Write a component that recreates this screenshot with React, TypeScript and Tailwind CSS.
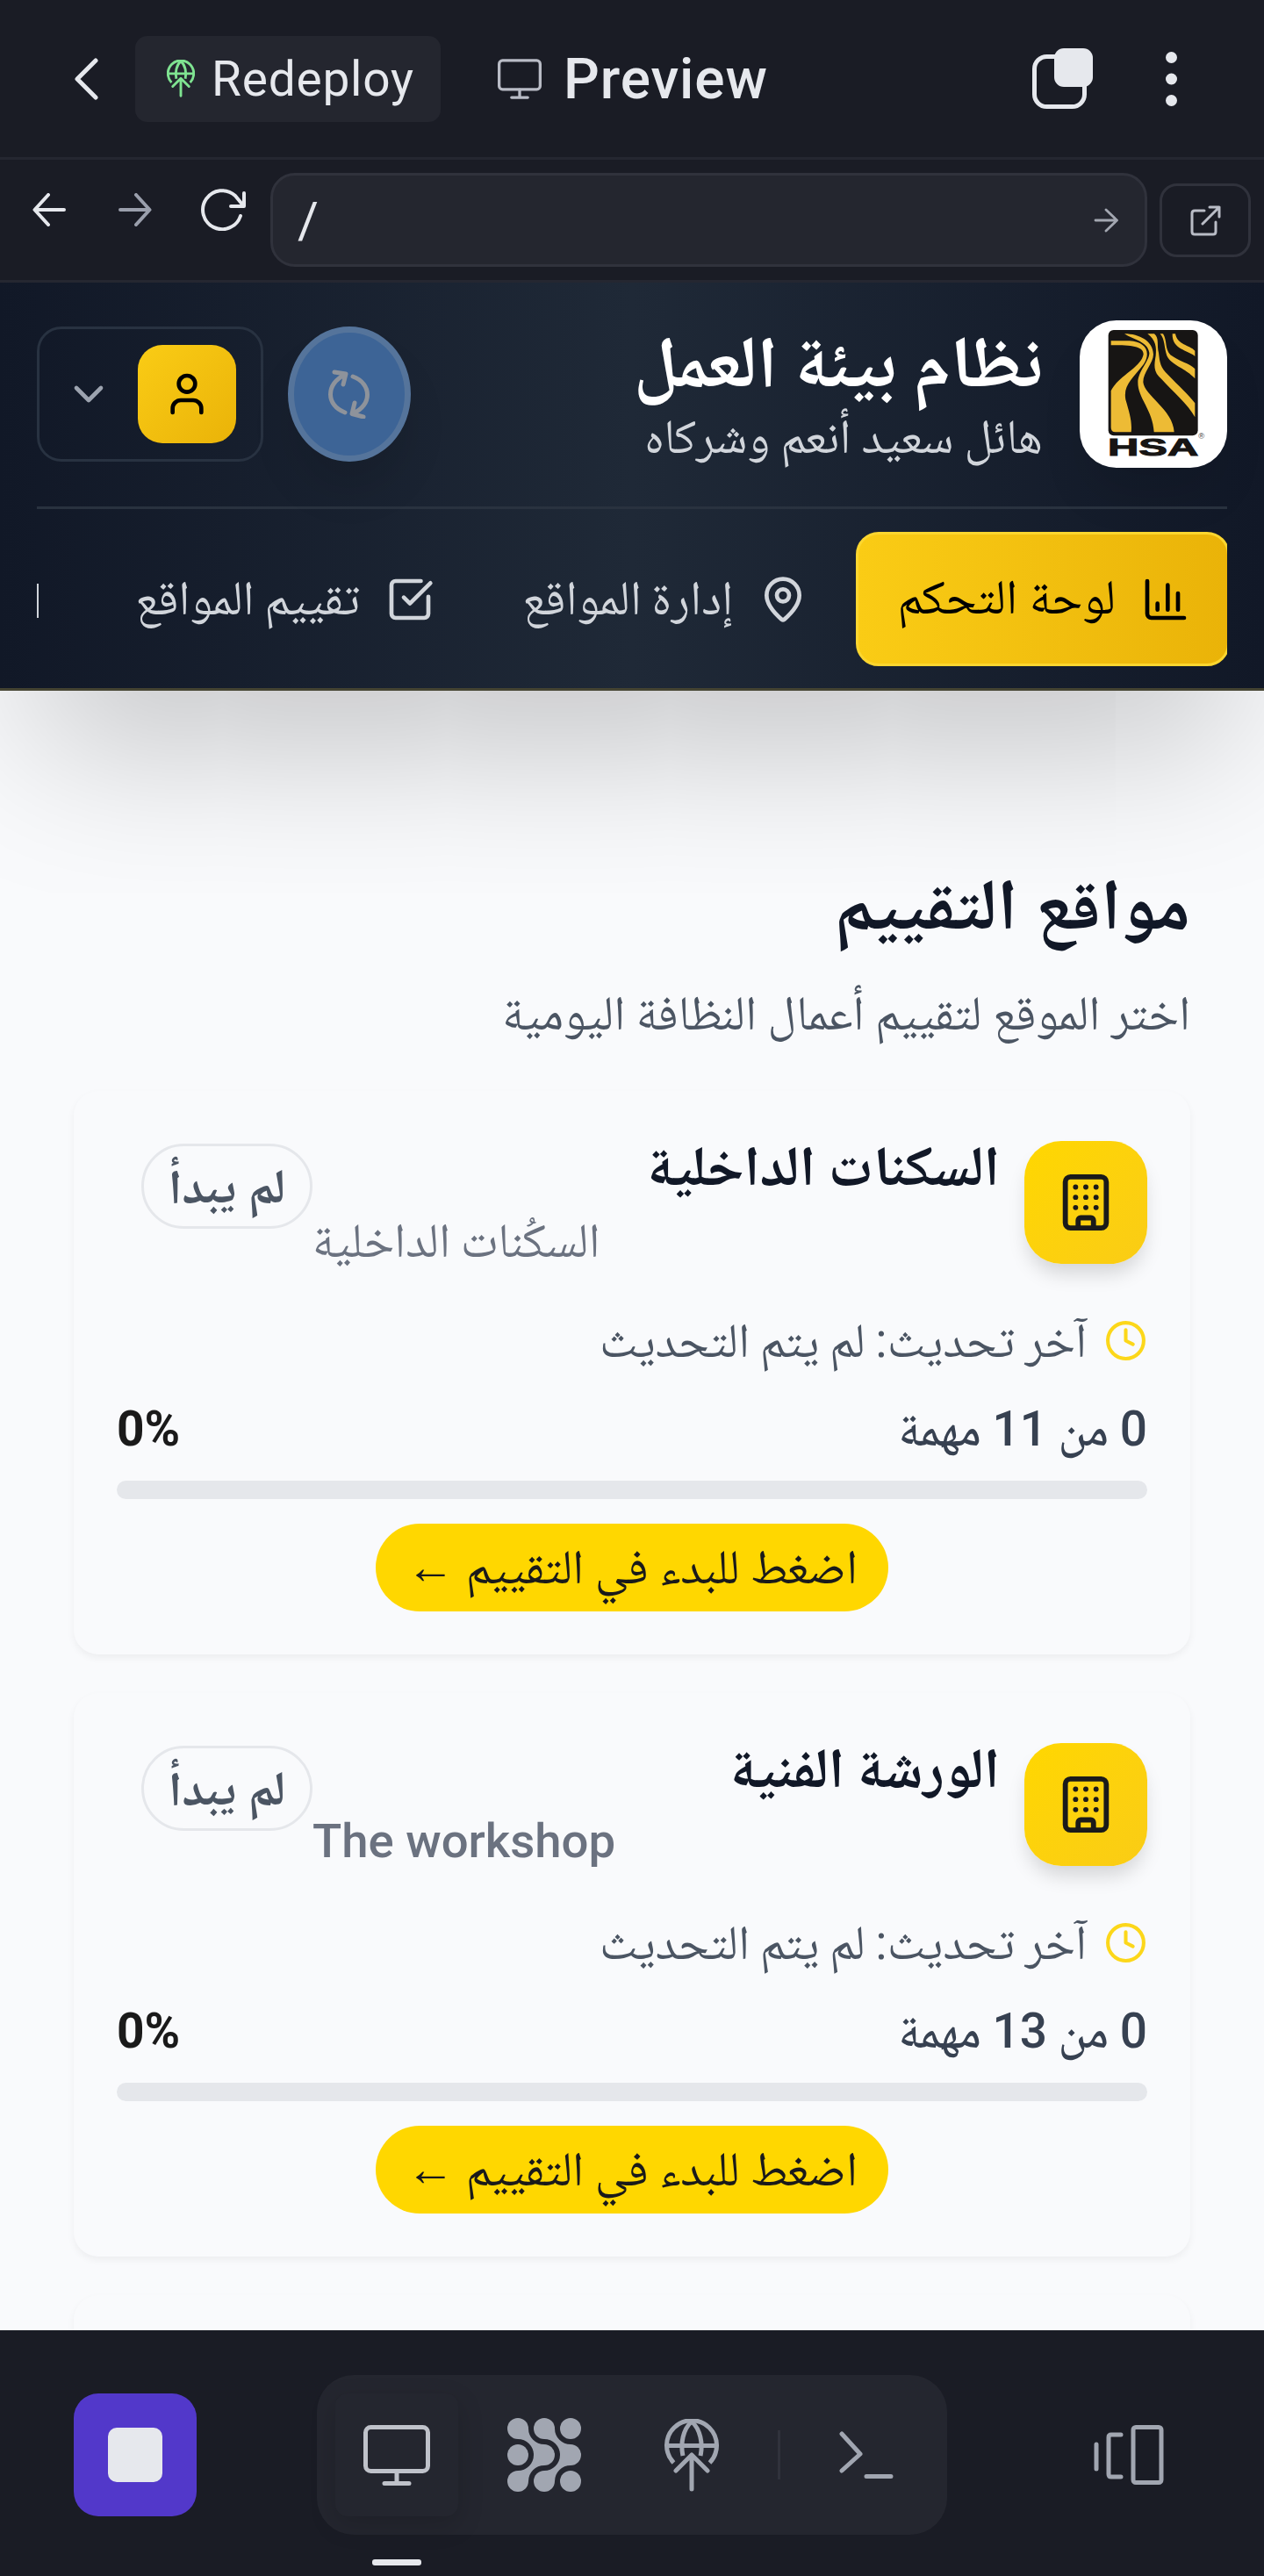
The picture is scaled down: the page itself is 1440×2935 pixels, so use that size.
import type { ReactNode } from "react";
import { Building, ChartColumn, ChevronDown, Clock, MapPin, SquareCheckBig, User } from "lucide-react";

function Line({ w, h, sw = 5, className = "", children }: { w: number; h: number; sw?: number; className?: string; children: ReactNode }) {
  return (
    <svg width={w} height={h} viewBox={`0 0 ${w} ${h}`} fill="none" stroke="currentColor" strokeWidth={sw} strokeLinecap="round" strokeLinejoin="round" className={`shrink-0 ${className}`}>
      {children}
    </svg>
  );
}

function GlobeUp({ w, h, sw }: { w: number; h: number; sw: number }) {
  return (
    <svg width={w} height={h} viewBox="0 0 62 83" fill="none" stroke="currentColor" strokeWidth={sw} className="shrink-0">
      <path d="M10.500 50A28.500 28.500 0 1 1 51.500 50" />
      <path d="M2.500 30.500H59.500M31 3C21 12 18 28 21 42M31 3C41 12 44 28 41 42" />
      <path d="M31 42V80M13 59L31 41L49 59" strokeLinecap="round" strokeLinejoin="round" />
    </svg>
  );
}

function Monitor({ w, h, sw }: { w: number; h: number; sw: number }) {
  return (
    <svg width={w} height={h} viewBox="0 0 76 69" fill="none" stroke="currentColor" strokeWidth={sw} strokeLinecap="round" strokeLinejoin="round" className="shrink-0">
      <rect x="2.500" y="2.500" width="71" height="50" rx="6" />
      <path d="M38 53V66M24 66.500H52" />
    </svg>
  );
}

function Logo() {
  return (
    <svg width="168" height="168" viewBox="30 14 504 504" direction="ltr">
      <rect x="128" y="47" width="306" height="361" rx="18" fill="#171514" />
      <g fill="#edbb35">
        <path d="M137 84H200C255 87 276 122 248 165C212 212 178 235 187 285C200 330 210 360 206 396H152Q137 396 137 380V255C160 205 240 175 248 130C248 105 215 98 137 99Z" />
        <path d="M183 60C235 60 280 85 282 130C282 160 247 190 247 225C250 270 350 320 353 396H284C280 320 228 280 229 225C229 190 270 150 268 125C262 85 215 82 183 60Z" />
        <path d="M262 60H285C303 75 293 100 300 125C304 160 306 175 332 200C370 240 400 265 424 297V345C400 300 345 255 310 215C280 190 285 165 290 135C293 105 290 82 262 60Z" />
        <path d="M305 60H315C330 85 320 110 340 132C370 155 405 160 424 180V213C395 180 340 165 328 135C318 105 322 80 305 60Z" />
        <path d="M347 60H357C364 98 405 98 424 118V137C400 115 345 115 347 60Z" />
      </g>
      <text x="126" y="475" textLength="310" lengthAdjust="spacingAndGlyphs" fontFamily="Liberation Sans" fontWeight="bold" fontSize="82" fill="#171514" stroke="#171514" strokeWidth="3">HSA</text>
      <text x="436" y="419" fontFamily="Liberation Sans" fontSize="28" fill="#444">®</text>
    </svg>
  );
}

function BlobGrid() {
  const dots = [12, 42, 72];
  return (
    <svg width="84" height="84" viewBox="0 0 84 84" fill="currentColor">
      {dots.map((x) => dots.map((y) => <circle key={`${x}-${y}`} cx={x} cy={y} r="12" />))}
      {[0, 30].map((dx) => (
        <g key={dx} transform={`translate(${dx} 0)`}>
          <path d="M12 12V24A18 18 0 0 1 30 42H42V30A18 18 0 0 1 24 12Z" />
          <path d="M12 72V60A18 18 0 0 0 30 42H42V54A18 18 0 0 0 24 72Z" />
        </g>
      ))}
    </svg>
  );
}

function TopBar() {
  return (
    <header className="flex h-[182px] items-center border-b-[3px] border-[#252731] pl-[85px] pr-[99px] text-[#e6e8ed]">
      <Line w={27} h={48} sw={5}>
        <path d="M24 3L3 24L24 45" />
      </Line>
      <button className="ml-[42px] flex h-[98px] w-[348px] items-center rounded-[14px] bg-[#24262f] pl-[36px]">
        <span className="text-[#7fe391]">
          <GlobeUp w={32} h={43} sw={5.6} />
        </span>
        <span className="mt-[1px] ml-[19px] text-[55px] leading-[84px] tracking-[0.8px]">Redeploy</span>
      </button>
      <div className="ml-[65px] flex items-center">
        <span className="text-[#b9bcc6]">
          <Monitor w={50} h={46} sw={5} />
        </span>
        <span className="mt-[2px] ml-[25px] text-[64px] leading-[84px] font-medium tracking-[0.9px]">Preview</span>
      </div>
      <div className="ml-auto flex items-center gap-[83px]">
        <svg width="69" height="69" viewBox="0 0 69 69" className="mt-0">
          <rect x="2.500" y="9.500" width="57" height="57" rx="14" fill="none" stroke="#e6e8ed" strokeWidth="5" />
          <rect x="25" y="0" width="44" height="44" rx="11" fill="#e6e8ed" />
        </svg>
        <svg width="13" height="62" viewBox="0 0 13 62" fill="#e6e8ed">
          <circle cx="6.500" cy="6.500" r="6.500" />
          <circle cx="6.500" cy="31" r="6.500" />
          <circle cx="6.500" cy="55.500" r="6.500" />
        </svg>
      </div>
    </header>
  );
}

function AddressBar() {
  return (
    <div className="flex h-[140px] items-start border-b-[3px] border-[#252731] text-[#e6e8ed]">
      <Line w={38} h={38} sw={4} className="mt-[38px] ml-[37px]">
        <path d="M36 19H3M18 2L2.500 19L18 36" />
      </Line>
      <Line w={38} h={38} sw={4} className="mt-[38px] ml-[60px] text-[#9a9fac]">
        <path d="M2 19H35M20 2L35.500 19L20 36" />
      </Line>
      <Line w={52} h={48} sw={4} className="mt-[33px] ml-[56px]">
        <path d="M45 31A22 22 0 1 1 39 8L48 19M49 5V20H34" />
      </Line>
      <div className="mt-[15px] ml-[27px] flex h-[107px] w-[999px] items-center justify-between rounded-[28px] border-[3px] border-[#30323c] bg-[#24262f] pr-[29px] pl-[28px]">
        <span className="text-[58px] leading-[84px]">/</span>
        <Line w={29} h={28} sw={2.800} className="text-[#a3a7b1]">
          <path d="M2 14H26M14 2L26.500 14L14 26" />
        </Line>
      </div>
      <button className="mt-[27px] ml-[14px] flex h-[84px] w-[104px] items-center justify-center rounded-[20px] border-[3px] border-[#30323c] text-[#b9bcc6]">
        <Line w={35} h={35} sw={3}>
          <path d="M16 6H5Q2 6 2 9V30Q2 33 5 33H26Q29 33 29 30V19M22 2H33V13M33 2L14 21" />
        </Line>
      </button>
    </div>
  );
}

function NavItem({ icon, label, active = false }: { icon: ReactNode; label: string; active?: boolean }) {
  return (
    <a
      className={
        active
          ? "flex h-[153px] w-[426px] shrink-0 items-center gap-[29px] rounded-[26px] border-[3px] border-[#fcd62f] bg-linear-to-l from-[#eab308] to-[#facc15] px-[42px] text-black"
          : "flex h-[153px] shrink-0 items-center gap-[29px] px-[45px] text-[#d1d5db] [word-spacing:-2px]"
      }
    >
      {icon}
      <span className={active ? "-mt-[3px] text-[55.500px] leading-[84px] whitespace-nowrap" : "-mt-[3px] text-[55px] leading-[84px] whitespace-nowrap"}>{label}</span>
    </a>
  );
}

function AppHeader() {
  return (
    <header dir="rtl" className="relative z-10 h-[465px] border-b-[3px] border-[#454432] bg-linear-to-r from-[#111827] via-[#1f2937] to-[#111827] px-[42px] shadow-[0_94px_187px_-45px_rgba(0,0,0,0.25)]">
      <div className="flex h-[258px] items-start border-b-[3px] border-[#29323f] pt-[43px]">
        <div className="h-[168px] w-[168px] shrink-0 overflow-hidden rounded-[42px] bg-white shadow-[0_37px_56px_-11px_rgba(0,0,0,0.1)]">
          <Logo />
        </div>
        <div className="mt-[6px] mr-[42px] whitespace-nowrap">
          <h1 className="text-[83px] leading-[84px] font-bold text-white [word-spacing:-1px]">نظام بيئة العمل</h1>
          <p className="text-[55px] leading-[84px] text-[#d1d5db] [word-spacing:-1.5px]">هائل سعيد أنعم وشركاه</p>
        </div>
        <button className="mt-[7px] mr-auto flex h-[154px] w-[140px] items-center justify-center rounded-[50%] border-[7px] border-[#55749b] bg-[#3d6496] text-[#8e939b] shadow-[0_37px_56px_-11px_rgba(0,0,0,0.12)]">
          <Line w={48} h={56} sw={5}>
            <path d="M19 49C-3 41 -3 16 19 6M7 3L20 5L17 17M28 8C50 16 50 41 28 50M30 38L27 50.500L40 54" />
          </Line>
        </button>
        <button className="mt-[7px] mr-[28px] flex h-[154px] w-[258px] items-center rounded-[28px] border-[3px] border-[#283241] pr-[28px]">
          <span className="flex h-[112px] w-[112px] items-center justify-center rounded-[28px] bg-linear-to-br from-[#facc15] to-[#eab308] text-black">
            <User size={56} />
          </span>
          <ChevronDown size={56} className="mr-[28px] text-[#9ca3af]" />
        </button>
      </div>
      <nav className="-mr-[3px] mt-[26px] flex gap-[10px] overflow-hidden [clip-path:inset(0_3px_0_0)]">
        <NavItem active label="لوحة التحكم" icon={<ChartColumn size={56} className="shrink-0" />} />
        <NavItem label="إدارة المواقع" icon={<MapPin size={56} className="shrink-0" />} />
        <NavItem label="تقييم المواقع" icon={<SquareCheckBig size={56} className="shrink-0" />} />
        <span className="mt-[59px] mr-auto h-[39px] w-[1.500px] shrink-0 bg-[#d1d5db]" />
      </nav>
    </header>
  );
}

function SiteCard({ name, subtitle, total, medium = false }: { name: string; subtitle: string; total: number; medium?: boolean }) {
  return (
    <article className="mb-[44px] flex h-[642px] flex-col rounded-[28px] bg-[#f9fafc] px-[49px] pt-[57px] shadow-[0_4px_8px_rgba(0,0,0,0.05)]">
      <div className="flex h-[140px] items-start">
        <div className="flex h-[140px] w-[140px] shrink-0 items-center justify-center rounded-[42px] bg-linear-to-br from-[#ffd700] to-[#facc15] text-[#1a1a1a] shadow-[0_15px_22px_-4px_rgba(0,0,0,0.15)]">
          <Building size={70} />
        </div>
        <div className="-mt-[12px] mr-[28px] flex w-[783px] flex-col whitespace-nowrap">
          <h3 className="text-[64px] leading-[84px] font-bold text-[#111827] [word-spacing:-1px]">{name}</h3>
          <p className={medium ? "-mt-[2px] self-end text-[54.500px] leading-[82px] font-medium text-[#6b7280]" : "self-end text-[55px] leading-[82px] text-[#6b7280] [word-spacing:-2px]"}>{subtitle}</p>
        </div>
        <span className="mt-[3px] flex h-[97px] w-[195px] items-center justify-center rounded-full border-[3px] border-[#e5e7eb] text-[55px] leading-[84px] font-bold text-[#4b5563]">لم يبدأ</span>
      </div>
      <div className="mt-[45px] flex items-center text-[55px] leading-[84px] text-[#4b5563] [word-spacing:-2px]">
        <Clock size={49} className="text-[#fcd71a]" />
        <span className="mr-[20px]">آخر تحديث: لم يتم التحديث</span>
      </div>
      <div className="mt-[17px] flex items-center justify-between text-[55px] leading-[84px] font-medium">
        <span className="text-[#374151] [word-spacing:-1.2px]">0 من {total} مهمة</span>
        <span dir="ltr" className="font-bold text-[#1a1a1a]">0%</span>
      </div>
      <div className="mt-[17px] h-[21px] rounded-full bg-[#e5e7eb]" />
      <button className="mt-[28px] flex h-[100px] w-[584px] items-center justify-center self-center rounded-full bg-[#ffd700] pb-[2px] text-[55px] leading-[84px] text-[#1a1a1a] [word-spacing:-1px]">اضغط للبدء في التقييم ←</button>
    </article>
  );
}

function Dock() {
  return (
    <footer className="relative flex h-[280px] items-start bg-[#1a1c25] pt-[51px] pl-[84px] text-[#a1a6b1]">
      <button className="mt-[21px] flex h-[140px] w-[140px] items-center justify-center rounded-[28px] bg-[#5238ca]">
        <span className="h-[62px] w-[62px] rounded-[10px] bg-[#e6e8ed]" />
      </button>
      <div className="ml-[137px] flex h-[182px] w-[718px] items-center gap-[28px] rounded-[42px] bg-[#24262f] p-[21px]">
        <span className="flex h-[140px] w-[140px] items-center justify-center rounded-[14px] bg-[#24262f] text-[#bfc2ca] shadow-[0_10px_30px_rgba(0,0,0,0.16)]">
          <Monitor w={76} h={69} sw={5} />
        </span>
        <span className="flex w-[140px] justify-center"><BlobGrid /></span>
        <span className="flex w-[140px] justify-center"><GlobeUp w={62} h={83} sw={5} /></span>
        <span className="h-[56px] w-[3px] bg-[#30323c]" />
        <span className="flex w-[140px] justify-center">
          <Line w={62} h={55} sw={5}>
            <path d="M3 3L24 26L3 45M31 51.500H59" />
          </Line>
        </span>
      </div>
      <Line w={80} h={68} sw={5} className="mt-[57px] ml-[167px]">
        <path d="M3 22V50M31 11H20Q17 11 17 14V56Q17 59 20 59H31" />
        <rect x="45" y="2.500" width="32" height="63" rx="3" />
      </Line>
      <span className="absolute bottom-[12px] left-[424px] h-[7px] w-[56px] rounded-[3px] bg-[#e6e8ed]" />
    </footer>
  );
}

export default function App() {
  return (
    <div className="flex h-[2935px] w-[1440px] flex-col overflow-hidden bg-[#1a1c25] font-['Roboto','Noto_Naskh_Arabic','Noto_Naskh_Arabic_UI',sans-serif]">
      <TopBar />
      <AddressBar />
      <div className="h-[2333px] shrink-0 overflow-hidden bg-[#f9fafc]">
        <AppHeader />
        <main dir="rtl" className="px-[84px] pt-[194px]">
          <h2 className="text-[82px] leading-[100px] font-bold text-[#111827]">مواقع التقييم</h2>
          <p className="mt-[31px] mb-[47px] text-[55px] leading-[84px] text-[#4b5563] [word-spacing:-1.2px]">اختر الموقع لتقييم أعمال النظافة اليومية</p>
          <SiteCard name="السكنات الداخلية" subtitle="السكُنات الداخلية" total={11} />
          <SiteCard name="الورشة الفنية" subtitle="The workshop" total={13} medium />
          <article className="h-[642px] rounded-[28px] bg-[#f9fafc] shadow-[0_4px_8px_rgba(0,0,0,0.05)]" />
        </main>
      </div>
      <Dock />
    </div>
  );
}
